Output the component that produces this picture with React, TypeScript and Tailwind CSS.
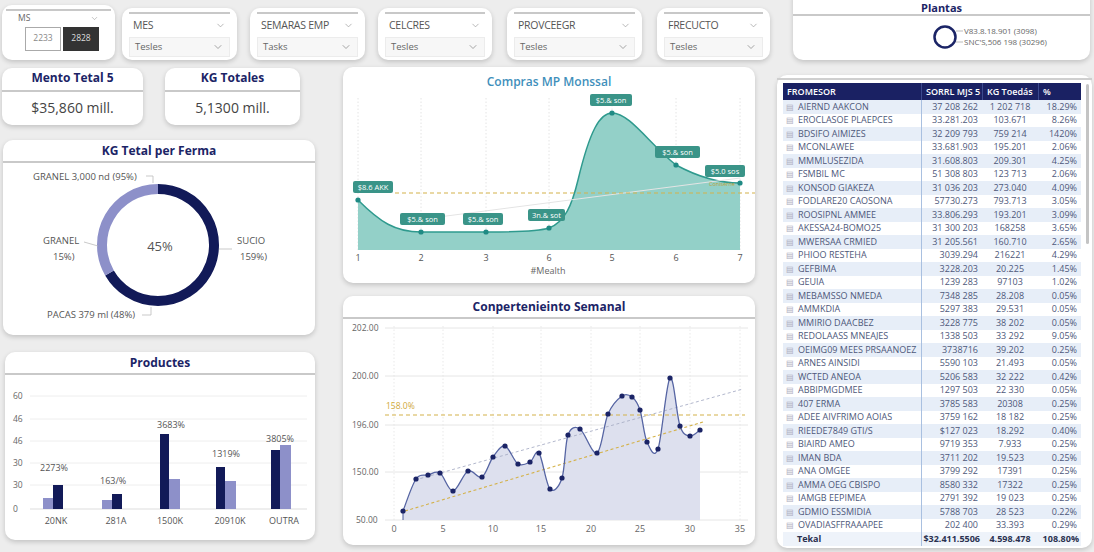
import { ChevronDown } from 'lucide-react'

const navy = '#1b2466'

const rows: [string, string, string, string][] = [
  ['AIERND AAKCON', '37 208 262', '1 202 718', '18.29%'],
  ['EROCLASOE PLAEPCES', '33.281.203', '103.671', '8.26%'],
  ['BDSIFO AIMIZES', '32 209 793', '759 214', '1420%'],
  ['MCONLAWEE', '33.681.903', '195.201', '2.06%'],
  ['MMMLUSEZIDA', '31.608.803', '209.301', '4.25%'],
  ['FSMBIL MC', '51 308 803', '123 713', '2.06%'],
  ['KONSOD GIAKEZA', '31 036 203', '273.040', '4.09%'],
  ['FODLARE20 CAOSONA', '57730.273', '793.713', '3.05%'],
  ['ROOSIPNL AMMEE', '33.806.293', '193.201', '3.09%'],
  ['AKESSA24-BOMO25', '31 300 203', '168258', '3.65%'],
  ['MWERSAA CRMIED', '31 205.561', '160.710', '2.65%'],
  ['PHIOO RESTEHA', '3039.294', '216221', '4.29%'],
  ['GEFBIMA', '3228.203', '20.225', '1.45%'],
  ['GEUIA', '1239 283', '97103', '1.02%'],
  ['MEBAMSSO NMEDA', '7348 285', '28.208', '0.05%'],
  ['AMMKDIA', '5297 383', '29.531', '0.05%'],
  ['MMIRIO DAACBEZ', '3228 775', '38 202', '0.05%'],
  ['REDOLAASS MNEAJES', '1338 503', '33 292', '9.05%'],
  ['OEIMG09 MEES PRSAANOEZ', '3738716', '39.202', '0.25%'],
  ['ARNES AINSIDI', '5590 103', '21.493', '0.05%'],
  ['WCTED ANEOA', '5206 583', '32 222', '0.42%'],
  ['ABBIPMGDMEE', '1297 503', '22 330', '0.05%'],
  ['407 ERMA', '3785 583', '20308', '0.25%'],
  ['ADEE AIVFRIMO AOIAS', '3759 162', '18 182', '0.25%'],
  ['RIEEDE7849 GTI/S', '$127 023', '18.292', '0.40%'],
  ['BIAIRD AMEO', '9719 353', '7.933', '0.25%'],
  ['IMAN BDA', '3711 202', '19.523', '0.25%'],
  ['ANA OMGEE', '3799 292', '17391', '0.25%'],
  ['AMMA OEG CBISPO', '8580 332', '17322', '0.25%'],
  ['IAMGB EEPIMEA', '2791 392', '19 023', '0.25%'],
  ['GDMIO ESSMIDIA', '5788 703', '28 523', '0.22%'],
  ['OVADIASFFRAAAPEE', '202 400', '33.393', '0.29%'],
]

const weekly: [number, number][] = [
  [403, 513], [416, 481], [428, 477], [440, 475], [453, 493], [468, 473], [482, 479],
  [493, 459], [505, 448], [518, 466], [530, 464], [539, 455], [550, 491], [562, 480],
  [568, 437], [580, 431], [597, 455], [608, 416], [622, 398], [632, 399], [640, 412],
  [647, 444], [658, 451], [670, 380], [680, 428], [690, 438], [700, 432],
]

function smooth(pts: [number, number][]) {
  let d = `M${pts[0][0]},${pts[0][1]}`
  for (let i = 0; i < pts.length - 1; i++) {
    const p0 = pts[i - 1] || pts[i]
    const p1 = pts[i]
    const p2 = pts[i + 1]
    const p3 = pts[i + 2] || p2
    const c1x = p1[0] + (p2[0] - p0[0]) / 6
    const c1y = p1[1] + (p2[1] - p0[1]) / 6
    const c2x = p2[0] - (p3[0] - p1[0]) / 6
    const c2y = p2[1] - (p3[1] - p1[1]) / 6
    d += ` C${c1x},${c1y} ${c2x},${c2y} ${p2[0]},${p2[1]}`
  }
  return d
}

function Slicer({ label, value, w, ml }: { label: string; value: string; w: string; ml: string }) {
  return (
    <div className={`${w} ${ml} mt-[8px] h-[52px] bg-white rounded-[10px] shadow-[0_2px_5px_rgba(0,0,0,0.18)] px-[7px] pt-[4px]`}>
      <div className="h-[2px] bg-[#c8c8c8]" />
      <div className="flex items-center justify-between mt-[4px] px-[4px]">
        <span className="text-[10.5px] text-[#555] tracking-tight">{label}</span>
        <ChevronDown className="w-[11px] h-[11px] text-[#999]" strokeWidth={1.5} />
      </div>
      <div className="flex items-center justify-between mt-[3px] h-[20px] bg-[#f7f7f7] border border-[#ececec] px-[5px]">
        <span className="text-[9.5px] text-[#666]">{value}</span>
        <ChevronDown className="w-[12px] h-[12px] text-[#888]" strokeWidth={1.5} />
      </div>
    </div>
  )
}

function CardTitle({ children }: { children: string }) {
  return (
    <div className="h-[23px] border-b-2 border-[#c9c9c9] flex items-center justify-center">
      <span className="text-[12px] font-bold text-[#1b2466]">{children}</span>
    </div>
  )
}

export default function App() {
  const weeklyLine = smooth(weekly)
  const weeklyArea = `${weeklyLine} L700,522 L403,522 Z`
  const monthly =
    'M358,200 C380,222 395,232 421,232 L486,232 C520,232 540,231 549,228 C565,222 572,205 578,180 C590,130 600,113 612,113 C630,113 650,145 676,165 C700,178 720,183 740,183'

  return (
    <div className="w-[1094px] h-[552px] overflow-hidden bg-[#ededed] font-['Open_Sans','Noto_Sans',sans-serif]">
      {/* SLICERS */}
      <div className="flex items-start h-[62px]">
        <div className="w-[113px] ml-[2px] mt-[5px] h-[55px] bg-white rounded-[10px] shadow-[0_2px_5px_rgba(0,0,0,0.18)] px-[4px] pt-[4px]">
          <div className="h-[2px] bg-[#c8c8c8]" />
          <div className="flex items-center justify-between px-[12px] mt-[1px]">
            <span className="text-[8.5px] text-[#666]">MS</span>
            <ChevronDown className="w-[9px] h-[9px] text-[#999]" strokeWidth={1.5} />
          </div>
          <div className="flex ml-[19px] mt-[2px]">
            <div className="w-[36px] h-[24px] border border-[#aaa] bg-white flex items-center justify-center text-[8.5px] text-[#888]">2233</div>
            <div className="w-[36px] h-[24px] ml-[2px] bg-[#333] flex items-center justify-center text-[8.5px] text-[#ddd]">2828</div>
          </div>
        </div>
        <Slicer label="MES" value="Tesles" w="w-[115px]" ml="ml-[7px]" />
        <Slicer label="SEMARAS EMP" value="Tasks" w="w-[115px]" ml="ml-[13px]" />
        <Slicer label="CELCRES" value="Tesles" w="w-[114px]" ml="ml-[13px]" />
        <Slicer label="PROVCEEGR" value="Tesles" w="w-[135px]" ml="ml-[15px]" />
        <Slicer label="FRECUCTO" value="Tesles" w="w-[113px]" ml="ml-[15px]" />
        <div className="w-[297px] ml-[23px] mt-[-12px] h-[72px] bg-white rounded-[10px] shadow-[0_2px_5px_rgba(0,0,0,0.18)]">
          <div className="mt-[12px] h-[16px] border-b-2 border-[#c9c9c9] flex items-center justify-center">
            <span className="text-[11px] font-bold text-[#1b2466] leading-[13px]">Plantas</span>
          </div>
          <div className="flex items-center ml-[140px] mt-[8px]">
            <svg width="150" height="26" viewBox="0 0 150 26">
              <circle cx="12" cy="13" r="10.5" fill="none" stroke={navy} strokeWidth="2.5" />
              <path d="M23,7 L30,7 M23,18 L30,18" stroke="#aaa" strokeWidth="0.8" />
              <text x="31" y="10" fontSize="8" fill="#666">V83.8.18.901 (3098)</text>
              <text x="31" y="21" fontSize="8" fill="#666">SNC'S,506 198 (30296)</text>
            </svg>
          </div>
        </div>
      </div>

      {/* BODY */}
      <div className="flex items-start">
        {/* LEFT COLUMN */}
        <div className="w-[313px] ml-[2px] mt-[6px] flex flex-col">
          <div className="flex">
            <div className="w-[141px] h-[57px] bg-white rounded-[10px] shadow-[0_2px_5px_rgba(0,0,0,0.18)]">
              <div className="h-[24px] border-b-2 border-[#c9c9c9] flex items-end justify-center pb-[3px]">
                <span className="text-[12px] font-bold text-[#1b2466]">Mento Tetal 5</span>
              </div>
              <div className="text-center text-[14px] text-[#444] mt-[5px]">$35,860 mill.</div>
            </div>
            <div className="w-[135px] ml-[22px] h-[57px] bg-white rounded-[10px] shadow-[0_2px_5px_rgba(0,0,0,0.18)]">
              <div className="h-[24px] border-b-2 border-[#c9c9c9] flex items-end justify-center pb-[3px]">
                <span className="text-[12px] font-bold text-[#1b2466]">KG Totales</span>
              </div>
              <div className="text-center text-[14px] text-[#444] mt-[5px]">5,1300 mill.</div>
            </div>
          </div>

          {/* Donut */}
          <div className="w-[312px] ml-[1px] mt-[15px] h-[195px] bg-white rounded-[10px] shadow-[0_2px_5px_rgba(0,0,0,0.18)] overflow-hidden">
            <CardTitle>KG Tetal per Ferma</CardTitle>
            <svg width="312" height="170" viewBox="3 165 312 170" className="block">
              <path d="M158,191 A56,56 0 1 1 109.5,275" fill="none" stroke="#121a58" strokeWidth="10" />
              <path d="M109.5,275 A56,56 0 0 1 158,191" fill="none" stroke="#8d90c9" strokeWidth="10" />
              <text x="160" y="253" fontSize="13" fill="#555" textAnchor="middle">45%</text>
              <path d="M146,178 L153,178 L153,185" fill="none" stroke="#bbb" strokeWidth="0.8" />
              <text x="33" y="182" fontSize="9.5" fill="#555">GRANEL 3,000 nd (95%)</text>
              <path d="M84,244 L98,248" fill="none" stroke="#bbb" strokeWidth="0.8" />
              <text x="43" y="246" fontSize="9.5" fill="#555">GRANEL</text>
              <text x="53" y="262" fontSize="9.5" fill="#555">15%)</text>
              <path d="M219,251 L232,251" fill="none" stroke="#bbb" strokeWidth="0.8" />
              <text x="237" y="246" fontSize="9.5" fill="#555">SUCIO</text>
              <text x="240" y="262" fontSize="9.5" fill="#555">159%)</text>
              <path d="M142,317 L151,317 L151,309" fill="none" stroke="#bbb" strokeWidth="0.8" />
              <text x="47" y="320" fontSize="9.5" fill="#555">PACAS 379 ml (48%)</text>
            </svg>
          </div>

          {/* Products */}
          <div className="w-[310px] ml-[3px] mt-[17px] h-[188px] bg-white rounded-[10px] shadow-[0_2px_5px_rgba(0,0,0,0.18)] overflow-hidden">
            <CardTitle>Productes</CardTitle>
            <svg width="310" height="164" viewBox="5 376 310 164" className="block">
              {[397, 420, 442, 464, 486].map((y) => (
                <line key={y} x1="30" x2="307" y1={y} y2={y} stroke="#eee" strokeWidth="1" />
              ))}
              <line x1="30" x2="307" y1="510" y2="510" stroke="#ddd" strokeWidth="1" />
              {[
                ['60', 400],
                ['46', 423],
                ['46', 445],
                ['30', 467],
                ['30', 489],
                ['0', 513],
              ].map(([t, y]) => (
                <text key={y} x="13" y={y} fontSize="8.5" fill="#666">
                  {t}
                </text>
              ))}
              <rect x="43" y="499" width="10" height="11" fill="#8d90c9" />
              <rect x="53" y="486" width="10" height="24" fill="#121a58" />
              <rect x="102" y="501" width="10" height="9" fill="#8d90c9" />
              <rect x="112" y="495" width="10" height="15" fill="#121a58" />
              <rect x="160" y="435" width="9" height="75" fill="#121a58" />
              <rect x="169" y="480" width="11" height="30" fill="#8d90c9" />
              <rect x="216" y="468" width="9" height="42" fill="#121a58" />
              <rect x="225" y="482" width="11" height="28" fill="#8d90c9" />
              <rect x="271" y="451" width="9" height="59" fill="#121a58" />
              <rect x="280" y="446" width="11" height="64" fill="#8d90c9" />
              <g fontSize="9" fill="#555">
                <text x="40" y="472">2273%</text>
                <text x="100" y="485">163/%</text>
                <text x="157" y="429">3683%</text>
                <text x="212" y="458">1319%</text>
                <text x="266" y="443">3805%</text>
              </g>
              <g fontSize="9" fill="#555" textAnchor="middle">
                <text x="56" y="525">20NK</text>
                <text x="116" y="525">281A</text>
                <text x="170" y="525">1500K</text>
                <text x="230" y="525">20910K</text>
                <text x="284" y="525">OUTRA</text>
              </g>
            </svg>
          </div>
        </div>

        {/* MIDDLE COLUMN */}
        <div className="w-[412px] ml-[28px] flex flex-col">
          <div className="h-[216px] mt-[5px] bg-white rounded-[10px] shadow-[0_2px_5px_rgba(0,0,0,0.18)] overflow-hidden">
            <div className="h-[24px] flex items-end justify-center">
              <span className="text-[12px] font-semibold text-[#3f8fbb]">Compras MP Monssal</span>
            </div>
            <svg width="412" height="192" viewBox="343 91 412 192" className="block">
              {[358, 421, 486, 549, 612, 676, 740].map((x) => (
                <line key={x} x1={x} x2={x} y1="98" y2="250" stroke="#ddd" strokeWidth="0.8" strokeDasharray="1.5 2" />
              ))}
              <path d={`${monthly} L740,250 L358,250 Z`} fill="#93d0c8" />
              <path d={monthly} fill="none" stroke="#2f9a8e" strokeWidth="1.5" />
              <line x1="400" y1="222" x2="740" y2="178" stroke="#e4e4e4" strokeWidth="1" />
              <line x1="395" y1="193" x2="755" y2="193" stroke="#d4b24a" strokeWidth="1.2" strokeDasharray="4 3" />
              {[
                [358, 200],
                [421, 232],
                [486, 232],
                [549, 228],
                [612, 113],
                [676, 165],
                [740, 183],
              ].map(([x, y]) => (
                <circle key={x} cx={x} cy={y} r="2.6" fill="#1f8a84" />
              ))}
              {[
                [353, 181, 40, '$8.6 AKK'],
                [400, 213, 45, '$5.& son'],
                [463, 213, 40, '$5.& son'],
                [528, 209, 37, '3n.& sot'],
                [590, 94, 42, '$5.& son'],
                [655, 146, 45, '$5.& son'],
                [705, 165, 40, '$5.0 sos'],
              ].map(([x, y, w, t]) => (
                <g key={`${x}`}>
                  <rect x={x as number} y={y as number} width={w as number} height="12" rx="2" fill="#3a9488" />
                  <text x={(x as number) + (w as number) / 2} y={(y as number) + 9} fontSize="7.5" fill="#fff" textAnchor="middle">
                    {t}
                  </text>
                </g>
              ))}
              <text x="709" y="186" fontSize="5.5" fill="#b9a237">Coniserne</text>
              <g fontSize="9" fill="#555" textAnchor="middle">
                {[
                  [358, '1'],
                  [421, '2'],
                  [486, '3'],
                  [549, '6'],
                  [612, '5'],
                  [676, '6'],
                  [740, '7'],
                ].map(([x, t]) => (
                  <text key={x} x={x} y="261">
                    {t}
                  </text>
                ))}
                <text x="548" y="274" fill="#666">#Mealth</text>
              </g>
            </svg>
          </div>

          <div className="h-[249px] mt-[13px] bg-white rounded-[10px] shadow-[0_2px_5px_rgba(0,0,0,0.18)] overflow-hidden">
            <CardTitle>Conpertenieinto Semanal</CardTitle>
            <svg width="412" height="224" viewBox="343 321 412 224" className="block">
              {[330, 378, 427, 474, 522].map((y) => (
                <line key={y} x1="385" x2="748" y1={y} y2={y} stroke="#e6e6e6" strokeWidth="1" />
              ))}
              {[394, 443, 493, 541, 591, 640, 690, 740].map((x) => (
                <line key={x} x1={x} x2={x} y1="328" y2="522" stroke="#e3e3e3" strokeWidth="0.8" strokeDasharray="1.5 2" />
              ))}
              <path d={weeklyArea} fill="#dde0ee" />
              <line x1="403" y1="522" x2="403" y2="513" stroke="#4a5a9a" strokeWidth="1" />
              <line x1="415" y1="482" x2="743" y2="391" stroke="#a9afc6" strokeWidth="0.9" strokeDasharray="3 2.5" />
              <line x1="405" y1="513" x2="703" y2="424" stroke="#d4b24a" strokeWidth="1.1" strokeDasharray="3 2.5" />
              <line x1="385" y1="417" x2="745" y2="417" stroke="#d4b24a" strokeWidth="1.2" strokeDasharray="4 3" />
              <text x="386" y="411" fontSize="8.5" fill="#d0a93a">158.0%</text>
              <path d={weeklyLine} fill="none" stroke="#5665a3" strokeWidth="1.3" />
              {weekly.map(([x, y]) => (
                <circle key={x} cx={x} cy={y} r="2.6" fill="#1b2466" />
              ))}
              <g fontSize="8.5" fill="#666">
                <text x="352" y="333">202.00</text>
                <text x="352" y="381">200.00</text>
                <text x="352" y="430">196.00</text>
                <text x="352" y="477">150.00</text>
                <text x="356" y="525">50.00</text>
              </g>
              <g fontSize="9" fill="#666" textAnchor="middle">
                {[
                  [394, '0'],
                  [443, '5'],
                  [493, '10'],
                  [541, '15'],
                  [591, '20'],
                  [640, '25'],
                  [690, '30'],
                  [740, '35'],
                ].map(([x, t]) => (
                  <text key={x} x={x} y="534">
                    {t}
                  </text>
                ))}
              </g>
            </svg>
          </div>
        </div>

        {/* RIGHT COLUMN - TABLE */}
        <div className="w-[315px] ml-[22px] mt-[13px] h-[473px] bg-white rounded-[10px] shadow-[0_2px_5px_rgba(0,0,0,0.18)] relative">
          <div className="h-[2px] bg-[#cfcfcf] mt-[3px]" />
          <div className="ml-[6px] mt-[3px] w-[298px]">
            <div className="grid grid-cols-[138px_61px_56px_43px] h-[17px] bg-[#1a2163] text-white text-[9px] font-semibold items-center">
              <span className="pl-[4px]">FROMESOR</span>
              <span className="pl-[4px] border-l border-[#3c4a8e] h-full flex items-center whitespace-nowrap">SORRL MJS 5</span>
              <span className="pl-[4px] border-l border-[#3c4a8e] h-full flex items-center whitespace-nowrap">KG Toedás</span>
              <span className="pl-[4px] border-l border-[#3c4a8e] h-full flex items-center">%</span>
            </div>
            {rows.map(([name, a, b, c], i) => (
              <div
                key={i}
                className={`grid grid-cols-[138px_61px_56px_43px] h-[13.5px] items-center text-[9px] leading-[12px] text-[#4e587a] ${
                  i % 2 === 0 ? 'bg-[#e7eef8]' : 'bg-white'
                }`}
              >
                <span className="pl-[3px] whitespace-nowrap">
                  <span className="text-[#aab] mr-[4px] text-[8px]">▤</span>
                  {name}
                </span>
                <span className="border-l border-[#a9c0e0] h-full flex items-center justify-end pr-[4px] whitespace-nowrap">{a}</span>
                <span className="text-center whitespace-nowrap">{b}</span>
                <span className="text-right pr-[4px] whitespace-nowrap">{c}</span>
              </div>
            ))}
            <div className="grid grid-cols-[138px_61px_56px_43px] h-[14px] items-center text-[9px] leading-[12px] font-bold text-[#2a3150] bg-[#eef3fa]">
              <span className="pl-[14px]">Tekal</span>
              <span className="border-l border-[#a9c0e0] h-full flex items-center justify-end pr-[2px] whitespace-nowrap">$32.411.5506</span>
              <span className="text-center whitespace-nowrap">4.598.478</span>
              <span className="text-right pr-[2px] whitespace-nowrap">108.80%</span>
            </div>
          </div>
          <div className="absolute left-[309px] top-[9px] w-[3px] h-[160px] rounded-full bg-[#c4c4c4]" />
        </div>
      </div>
    </div>
  )
}
